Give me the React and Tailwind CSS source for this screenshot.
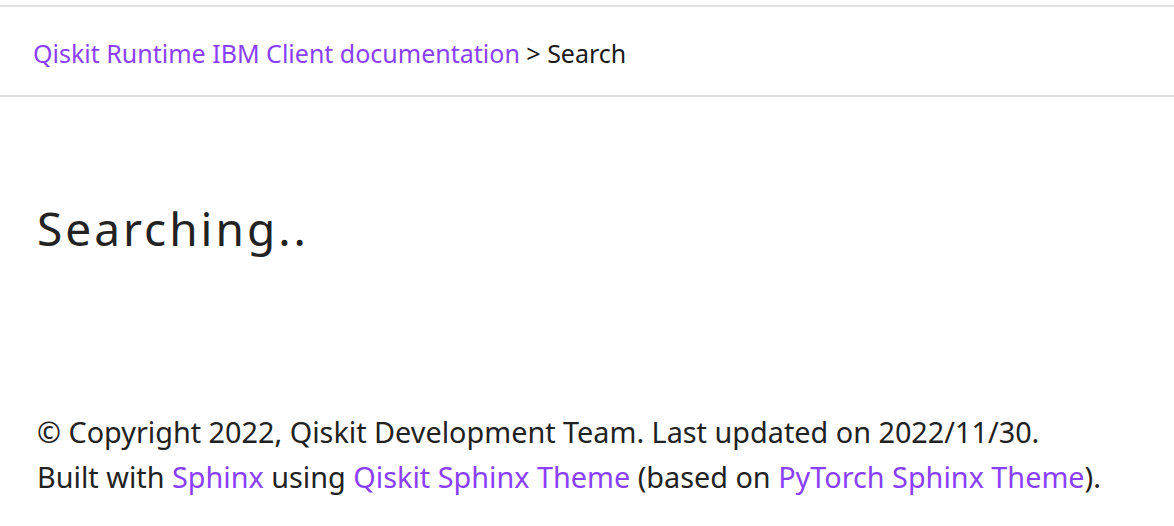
import React from 'react';

const font = { fontFamily: '"Noto Sans", "Open Sans", sans-serif' };

function Link({ children }) {
  return <a href="#" className="text-[#8a3ffc] no-underline">{children}</a>;
}

export default function App() {
  return (
    <div className="w-[1174px] h-[526px] bg-white overflow-hidden text-[#1a1a1a]" style={font}>
      <div className="mt-[5px] border-t-2 border-b-2 border-[#e0e0e0] h-[92px] flex items-center pl-[33px]">
        <div className="text-[25px] leading-none pt-[4px]">
          <Link>Qiskit Runtime IBM Client documentation</Link>
          <span> &gt; Search</span>
        </div>
      </div>
      <div className="pl-[37px] pt-[108px]">
        <h1 className="text-[46px] leading-none tracking-[3px] font-normal text-[#222]">Searching..</h1>
      </div>
      <footer className="pl-[37px] pt-[158px] text-[28.8px] leading-[45px] text-[#222]">
        <p>© Copyright 2022, Qiskit Development Team. Last updated on 2022/11/30.</p>
        <p>
          Built with <Link>Sphinx</Link> using <Link>Qiskit Sphinx Theme</Link> (based on{' '}
          <Link>PyTorch Sphinx Theme</Link>).
        </p>
      </footer>
    </div>
  );
}
